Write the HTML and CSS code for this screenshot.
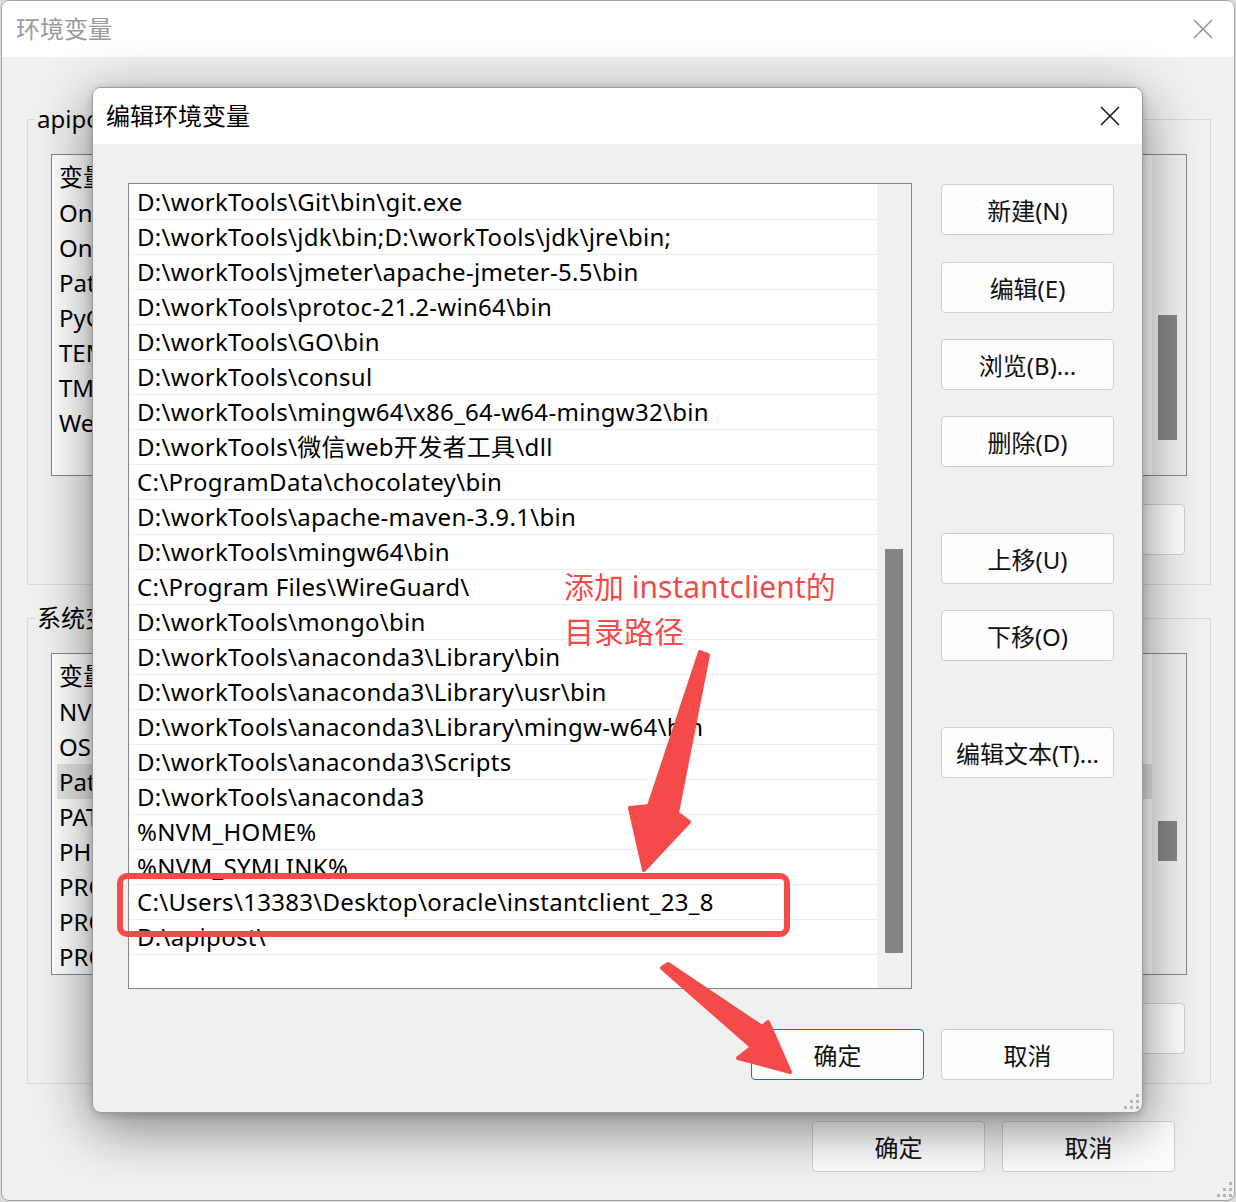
FILE: index.html
```html
<!DOCTYPE html>
<html lang="zh-CN">
<head>
<meta charset="utf-8">
<title>环境变量</title>
<link rel="stylesheet" href="styles.css">
</head>
<body>
<div class="outer">
  <div class="titlebar outer-title">
    <span class="title dim">环境变量</span>
    <svg class="close" width="20" height="20" viewBox="0 0 20 20"><path d="M1 1L19 19M19 1L1 19" stroke="#8c8c8c" stroke-width="1.4" fill="none"/></svg>
  </div>
  <div class="outer-body">
    <fieldset class="group">
      <legend>apipost 的用户变量(U)</legend>
      <div class="lv">
        <div class="lv-rows">
          <div class="lv-head">变量</div>
          <div class="lv-row">OneDrive</div>
          <div class="lv-row">OneDriveConsumer</div>
          <div class="lv-row">Path</div>
          <div class="lv-row">PyCharm Community Edition</div>
          <div class="lv-row">TEMP</div>
          <div class="lv-row">TMP</div>
          <div class="lv-row">WebStorm</div>
        </div>
        <div class="lv-scroll"><div class="lv-thumb t1"></div></div>
      </div>
      <div class="btnrow">
        <button class="btn">新建(N)...</button>
        <button class="btn">编辑(E)...</button>
        <button class="btn">删除(D)</button>
      </div>
    </fieldset>
    <fieldset class="group g2">
      <legend>系统变量(S)</legend>
      <div class="lv">
        <div class="lv-rows">
          <div class="lv-head">变量</div>
          <div class="lv-row">NVM_HOME</div>
          <div class="lv-row">OS</div>
          <div class="lv-row sel">Path</div>
          <div class="lv-row">PATHEXT</div>
          <div class="lv-row">PHP_HOME</div>
          <div class="lv-row">PROCESSOR_ARCHITECTURE</div>
          <div class="lv-row">PROCESSOR_IDENTIFIER</div>
          <div class="lv-row">PROCESSOR_LEVEL</div>
        </div>
        <div class="lv-scroll"><div class="lv-thumb t2"></div></div>
      </div>
      <div class="btnrow">
        <button class="btn">新建(W)...</button>
        <button class="btn">编辑(I)...</button>
        <button class="btn">删除(L)</button>
      </div>
    </fieldset>
    <div class="okrow">
      <button class="btn">确定</button>
      <button class="btn">取消</button>
    </div>
  </div>
  <svg class="grip outer-grip" width="18" height="18" viewBox="0 0 18 18"><g fill="#b4b4b4"><rect x="14" y="2" width="3" height="3"/><rect x="8" y="8" width="3" height="3"/><rect x="14" y="8" width="3" height="3"/><rect x="2" y="14" width="3" height="3"/><rect x="8" y="14" width="3" height="3"/><rect x="14" y="14" width="3" height="3"/></g></svg>
</div>

<div class="dialog">
  <div class="titlebar dlg-title">
    <span class="title">编辑环境变量</span>
    <svg class="close" width="20" height="20" viewBox="0 0 20 20"><path d="M1 1L19 19M19 1L1 19" stroke="#1a1a1a" stroke-width="1.6" fill="none"/></svg>
  </div>
  <div class="dialog-body">
    <div class="main-row">
      <div class="list">
        <div class="rows">
          <div class="row">D:\workTools\Git\bin\git.exe</div>
          <div class="row">D:\workTools\jdk\bin;D:\workTools\jdk\jre\bin;</div>
          <div class="row">D:\workTools\jmeter\apache-jmeter-5.5\bin</div>
          <div class="row">D:\workTools\protoc-21.2-win64\bin</div>
          <div class="row">D:\workTools\GO\bin</div>
          <div class="row">D:\workTools\consul</div>
          <div class="row">D:\workTools\mingw64\x86_64-w64-mingw32\bin</div>
          <div class="row">D:\workTools\微信web开发者工具\dll</div>
          <div class="row">C:\ProgramData\chocolatey\bin</div>
          <div class="row">D:\workTools\apache-maven-3.9.1\bin</div>
          <div class="row">D:\workTools\mingw64\bin</div>
          <div class="row">C:\Program Files\WireGuard\</div>
          <div class="row">D:\workTools\mongo\bin</div>
          <div class="row">D:\workTools\anaconda3\Library\bin</div>
          <div class="row">D:\workTools\anaconda3\Library\usr\bin</div>
          <div class="row">D:\workTools\anaconda3\Library\mingw-w64\bin</div>
          <div class="row">D:\workTools\anaconda3\Scripts</div>
          <div class="row">D:\workTools\anaconda3</div>
          <div class="row">%NVM_HOME%</div>
          <div class="row">%NVM_SYMLINK%</div>
          <div class="row">C:\Users\13383\Desktop\oracle\instantclient_23_8</div>
          <div class="row">D:\apipost\</div>
        </div>
        <div class="vscroll"><div class="thumb"></div></div>
      </div>
      <div class="btncol">
        <button class="btn">新建(N)</button>
        <button class="btn gap27">编辑(E)</button>
        <button class="btn gap26">浏览(B)...</button>
        <button class="btn gap26">删除(D)</button>
        <button class="btn gap66">上移(U)</button>
        <button class="btn gap26">下移(O)</button>
        <button class="btn gap66">编辑文本(T)...</button>
      </div>
    </div>
    <div class="bottom">
      <button class="btn primary">确定</button>
      <button class="btn">取消</button>
    </div>
  </div>
  <svg class="grip dlg-grip" width="18" height="18" viewBox="0 0 18 18"><g fill="#b4b4b4"><rect x="14" y="2" width="3" height="3"/><rect x="8" y="8" width="3" height="3"/><rect x="14" y="8" width="3" height="3"/><rect x="2" y="14" width="3" height="3"/><rect x="8" y="14" width="3" height="3"/><rect x="14" y="14" width="3" height="3"/></g></svg>
</div>

<div class="note">添加 instantclient的<br>目录路径</div>
<div class="redbox"></div>
<svg class="arrows" width="1236" height="1202" viewBox="0 0 1236 1202">
  <g fill="#f44b4a" stroke="#f44b4a" stroke-width="4" stroke-linejoin="round">
    <polygon points="700,652 708,655 677,813 689,822 644,870 630,808 649,806"/>
    <polygon points="662,968 668,964 762,1027 768,1022 790,1072 738,1058 752,1047"/>
  </g>
</svg>
</body>
</html>
```

FILE: styles.css
```css
* { box-sizing: border-box; }
html, body { margin: 0; padding: 0; }
body {
  width: 1236px;
  height: 1202px;
  overflow: hidden;
  position: relative;
  background: #d9dde2;
  font-family: "Noto Sans", "Noto Sans CJK SC", sans-serif;
  color: #000;
}
button { font-family: inherit; }

/* ---------- outer window ---------- */
.outer {
  position: relative;
  margin-left: 1px;
  width: 1234px;
  height: 1201px;
  border: 1px solid #a3a3a3;
  border-radius: 8px;
  background: #f0f0f0;
  overflow: hidden;
  display: flex;
  flex-direction: column;
}
.titlebar {
  height: 56px;
  background: #fff;
  display: flex;
  align-items: center;
  justify-content: space-between;
  flex: none;
}
.outer-title { padding: 0 21px 0 14px; }
.title { font-size: 24px; line-height: 30px; }
.dim { color: #9a9a9a; }
.close { display: block; }

.outer-body {
  flex: 1;
  padding: 47px 23px 0 25px;
  display: flex;
  flex-direction: column;
}
.group {
  margin: 0;
  border: 1px solid #d8d8d8;
  padding: 0 23px 29px 23px;
  min-width: 0;
}
.group legend {
  font-size: 24px;
  line-height: 30px;
  padding: 0 2px;
  margin-left: -16px;
  white-space: nowrap;
}
.g2 { margin-top: 18px; }
.lv {
  margin-top: 20px;
  height: 322px;
  border: 1px solid #828790;
  background: #fff;
  display: flex;
}
.lv-rows { flex: 1; padding-left: 7px; font-size: 24px; }
.lv-head { height: 40px; line-height: 44px; }
.lv-row { height: 35px; line-height: 35px; margin-left: -2px; padding-left: 2px; }
.lv-row.sel { background: #e3e3e3; }
.lv-scroll { width: 34px; background: #f0f0f0; padding-left: 6px; }
.lv-thumb { width: 19px; background: #858585; }
.t1 { margin-top: 160px; height: 125px; }
.t2 { margin-top: 167px; height: 40px; }

.btnrow {
  margin-top: 28px;
  display: flex;
  justify-content: flex-end;
  gap: 17px;
  padding-right: 2px;
}
.btn {
  width: 173px;
  height: 51px;
  border: 1px solid #cfcfcf;
  border-radius: 4px;
  background: #fdfdfd;
  font-size: 24px;
  color: #111;
  padding: 0;
  display: flex;
  align-items: center;
  justify-content: center;
}
.okrow {
  margin-top: 37px;
  margin-right: 36px;
  display: flex;
  justify-content: flex-end;
  gap: 17px;
}
.grip { position: absolute; }
.outer-grip { right: 1px; bottom: 2px; }

/* ---------- edit dialog ---------- */
.dialog {
  position: absolute;
  left: 92px;
  top: 87px;
  width: 1051px;
  height: 1026px;
  border: 1px solid #9b9b9b;
  border-radius: 9px;
  background: #f0f0f0;
  overflow: hidden;
  display: flex;
  flex-direction: column;
  box-shadow: 0 14px 56px rgba(0, 0, 0, 0.48), 0 2px 8px rgba(0, 0, 0, 0.18);
}
.dlg-title { padding: 0 22px 0 13px; }
.dialog-body {
  flex: 1;
  padding: 39px 28px 0 35px;
}
.main-row { display: flex; gap: 29px; }
.list {
  width: 784px;
  height: 806px;
  border: 1px solid #828790;
  background: #fff;
  display: flex;
}
.rows { flex: 1; padding-top: 1px; min-width: 0; }
.row {
  height: 35px;
  border-bottom: 1px solid #ececec;
  padding-left: 8px;
  line-height: 34px;
  font-size: 24px;
  letter-spacing: 0.3px;
  white-space: nowrap;
  overflow: hidden;
}
.vscroll {
  width: 34px;
  background: #f0f0f0;
  padding: 365px 0 0 8px;
}
.thumb { width: 18px; height: 404px; background: #858585; }

.btncol { display: flex; flex-direction: column; padding-top: 1px; }
.gap26 { margin-top: 26px; }
.gap27 { margin-top: 27px; }
.gap66 { margin-top: 66px; }

.bottom {
  margin-top: 40px;
  display: flex;
  justify-content: flex-end;
  gap: 17px;
}
.btn.primary { border-color: #1f6fc0; }
.dlg-grip { right: 2px; bottom: 2px; }

/* ---------- annotation ---------- */
.note {
  position: absolute;
  left: 564px;
  top: 564px;
  font-size: 30px;
  line-height: 45px;
  color: #f34b4a;
  white-space: nowrap;
}
.redbox {
  position: absolute;
  left: 117px;
  top: 873px;
  width: 673px;
  height: 64px;
  border: 6px solid #f44b4a;
  border-radius: 10px;
}
.arrows { position: absolute; left: 0; top: 0; pointer-events: none; }
```
